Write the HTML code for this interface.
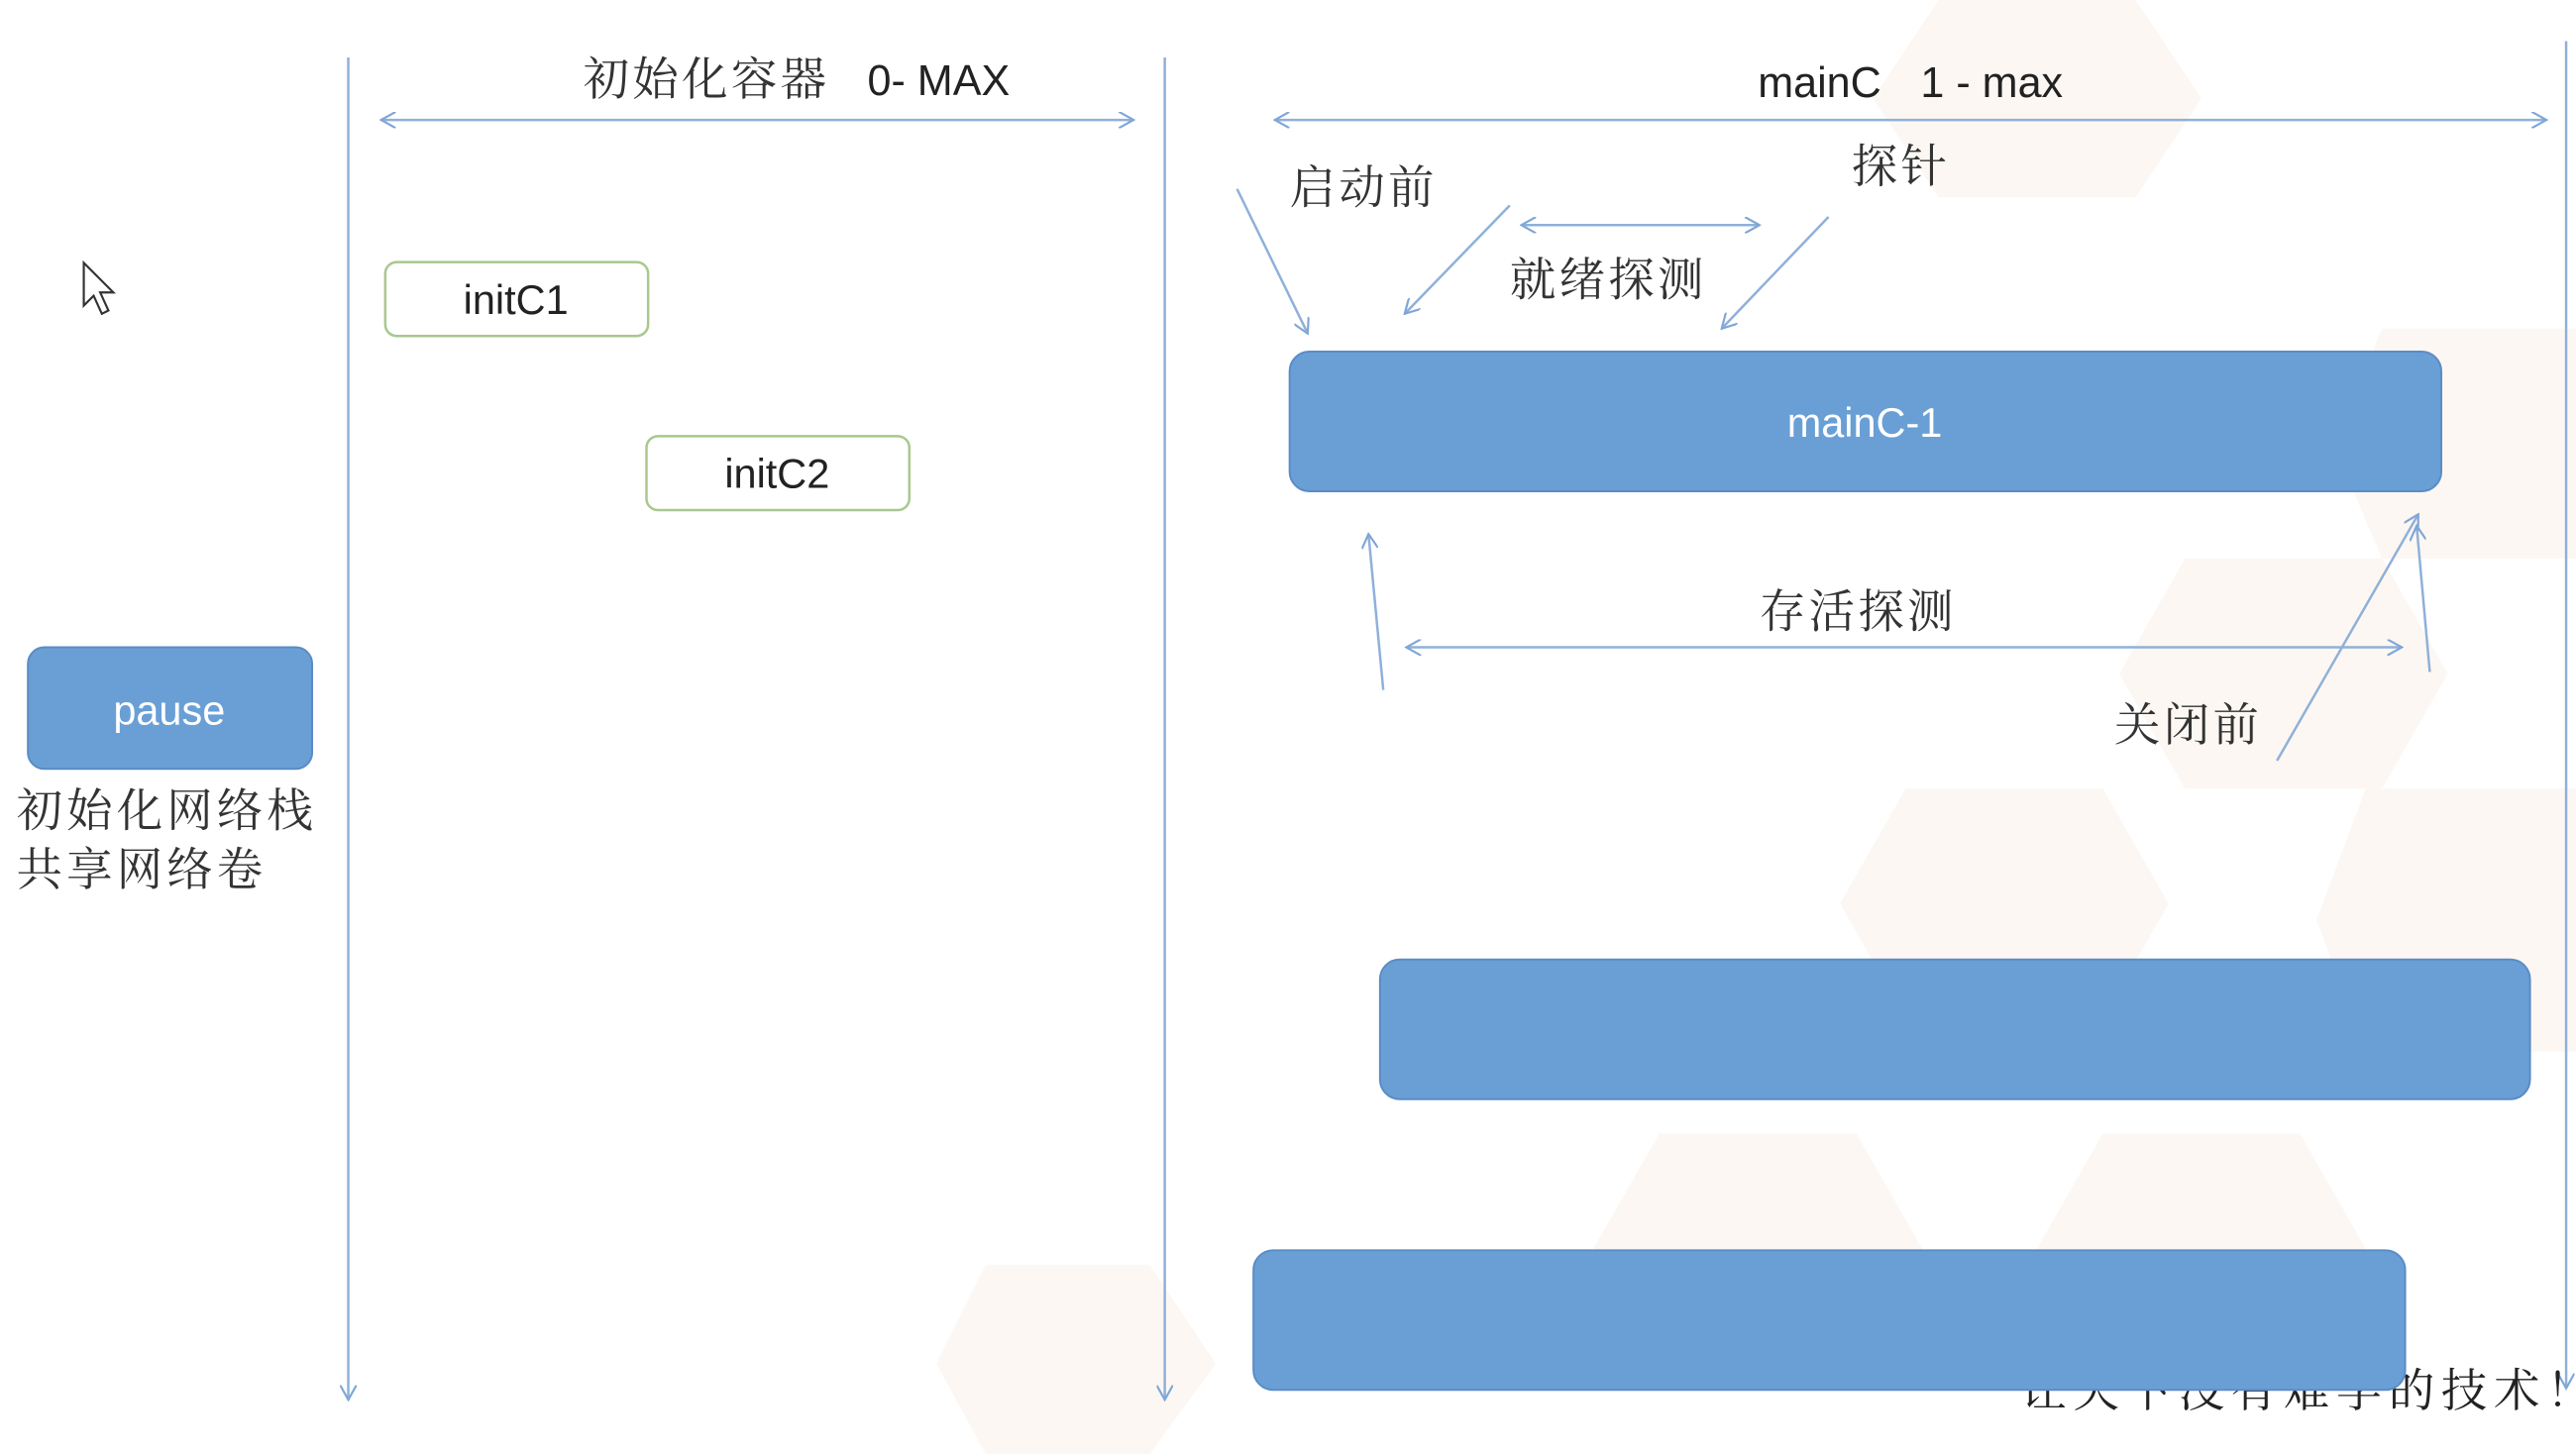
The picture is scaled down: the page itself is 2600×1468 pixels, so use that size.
<!DOCTYPE html>
<html><head><meta charset="utf-8"><style>html,body{margin:0;padding:0;background:#fff;overflow:hidden}svg{display:block}</style></head>
<body>
<svg width="2600" height="1468" viewBox="0 0 1568 885" preserveAspectRatio="none" xmlns="http://www.w3.org/2000/svg">
<defs>
<marker id="a" markerWidth="10" markerHeight="10" refX="9" refY="5" orient="auto-start-reverse" markerUnits="userSpaceOnUse"><path d="M0,0 L9,5 L0,10" fill="none" stroke="#7fa6d6" stroke-width="1.3"/></marker>
</defs>
<rect width="1568" height="885" fill="#fff"/>
<g fill="#fcf7f2">
<polygon points="1180,0 1300,0 1340,60 1300,120 1180,120 1140,60"/>
<polygon points="1330,340 1450,340 1490,410 1450,480 1330,480 1290,410"/>
<polygon points="1160,480 1280,480 1320,550 1280,620 1160,620 1120,550"/>
<polygon points="1450,200 1568,200 1568,340 1450,340 1420,270"/>
<polygon points="1440,480 1568,480 1568,640 1440,640 1410,560"/>
<polygon points="1010,690 1130,690 1170,760 1130,830 1010,830 970,760"/>
<polygon points="600,770 700,770 740,830 700,885 600,885 570,830"/>
<polygon points="1280,690 1400,690 1440,760 1400,830 1280,830 1240,760"/>
</g>
<g stroke="#8fb0da" stroke-width="1.5" fill="none">
<line x1="212" y1="35" x2="212" y2="852" marker-end="url(#a)"/>
<line x1="709" y1="35" x2="709" y2="852" marker-end="url(#a)"/>
<line x1="1562" y1="25" x2="1562" y2="845" marker-end="url(#a)"/>
<line x1="232" y1="73" x2="690" y2="73" marker-start="url(#a)" marker-end="url(#a)"/>
<line x1="776" y1="73" x2="1550" y2="73" marker-start="url(#a)" marker-end="url(#a)"/>
<line x1="753" y1="115" x2="796" y2="203" marker-end="url(#a)"/>
<line x1="919" y1="125" x2="855" y2="191" marker-end="url(#a)"/>
<line x1="926" y1="137" x2="1071" y2="137" marker-start="url(#a)" marker-end="url(#a)"/>
<line x1="1113" y1="132" x2="1048" y2="200" marker-end="url(#a)"/>
<line x1="842" y1="420" x2="833" y2="325" marker-end="url(#a)"/>
<line x1="856" y1="394" x2="1462" y2="394" marker-start="url(#a)" marker-end="url(#a)"/>
<line x1="1479" y1="409" x2="1471" y2="320" marker-end="url(#a)"/>
<line x1="1386" y1="463" x2="1472" y2="313" marker-end="url(#a)"/>
</g>
<g font-family="'Liberation Serif','Noto Serif CJK SC',serif" font-size="28" fill="#333" letter-spacing="2">
<text x="355" y="58">初始化容器</text>
<text x="785" y="124">启动前</text>
<text x="1127" y="111">探针</text>
<text x="919" y="180">就绪探测</text>
<text x="1071" y="382">存活探测</text>
<text x="1287" y="451">关闭前</text>
<text x="10" y="503" letter-spacing="2.5">初始化网络栈</text>
<text x="10" y="539" letter-spacing="2.5">共享网络卷</text>
<text x="1230" y="856" fill="#222" letter-spacing="4">让天下没有难学的技术！</text>
</g>
<g font-family="'Liberation Sans',sans-serif" font-size="26" fill="#222">
<text x="528" y="58">0- MAX</text>
<text x="1070" y="59">mainC</text>
<text x="1169" y="59">1 - max</text>
</g>
<rect x="234.5" y="159.5" width="160" height="45" rx="7" fill="#fff" stroke="#a8c88e" stroke-width="1.5"/>
<text x="314" y="191" text-anchor="middle" font-family="'Liberation Sans',sans-serif" font-size="25" fill="#222">initC1</text>
<rect x="393.5" y="265.5" width="160" height="45" rx="7" fill="#fff" stroke="#a8c88e" stroke-width="1.5"/>
<text x="473" y="297" text-anchor="middle" font-family="'Liberation Sans',sans-serif" font-size="25" fill="#222">initC2</text>
<g fill="#6a9fd6" stroke="#5a8cc6" stroke-width="1.2">
<rect x="17" y="394" width="173" height="74" rx="10"/>
<rect x="785" y="214" width="701" height="85" rx="12"/>
<rect x="840" y="584" width="700" height="85" rx="12"/>
<rect x="763" y="761" width="701" height="85" rx="12"/>
</g>
<text x="103" y="441" text-anchor="middle" font-family="'Liberation Sans',sans-serif" font-size="25" fill="#fff">pause</text>
<text x="1135" y="266" text-anchor="middle" font-family="'Liberation Sans',sans-serif" font-size="25" fill="#fff">mainC-1</text>
<path d="M51,160 L51,186 L57,180 L62,191 L66,189 L61,178 L69,178 Z" fill="#fff" stroke="#333" stroke-width="1.3"/>
</svg>
</body></html>
